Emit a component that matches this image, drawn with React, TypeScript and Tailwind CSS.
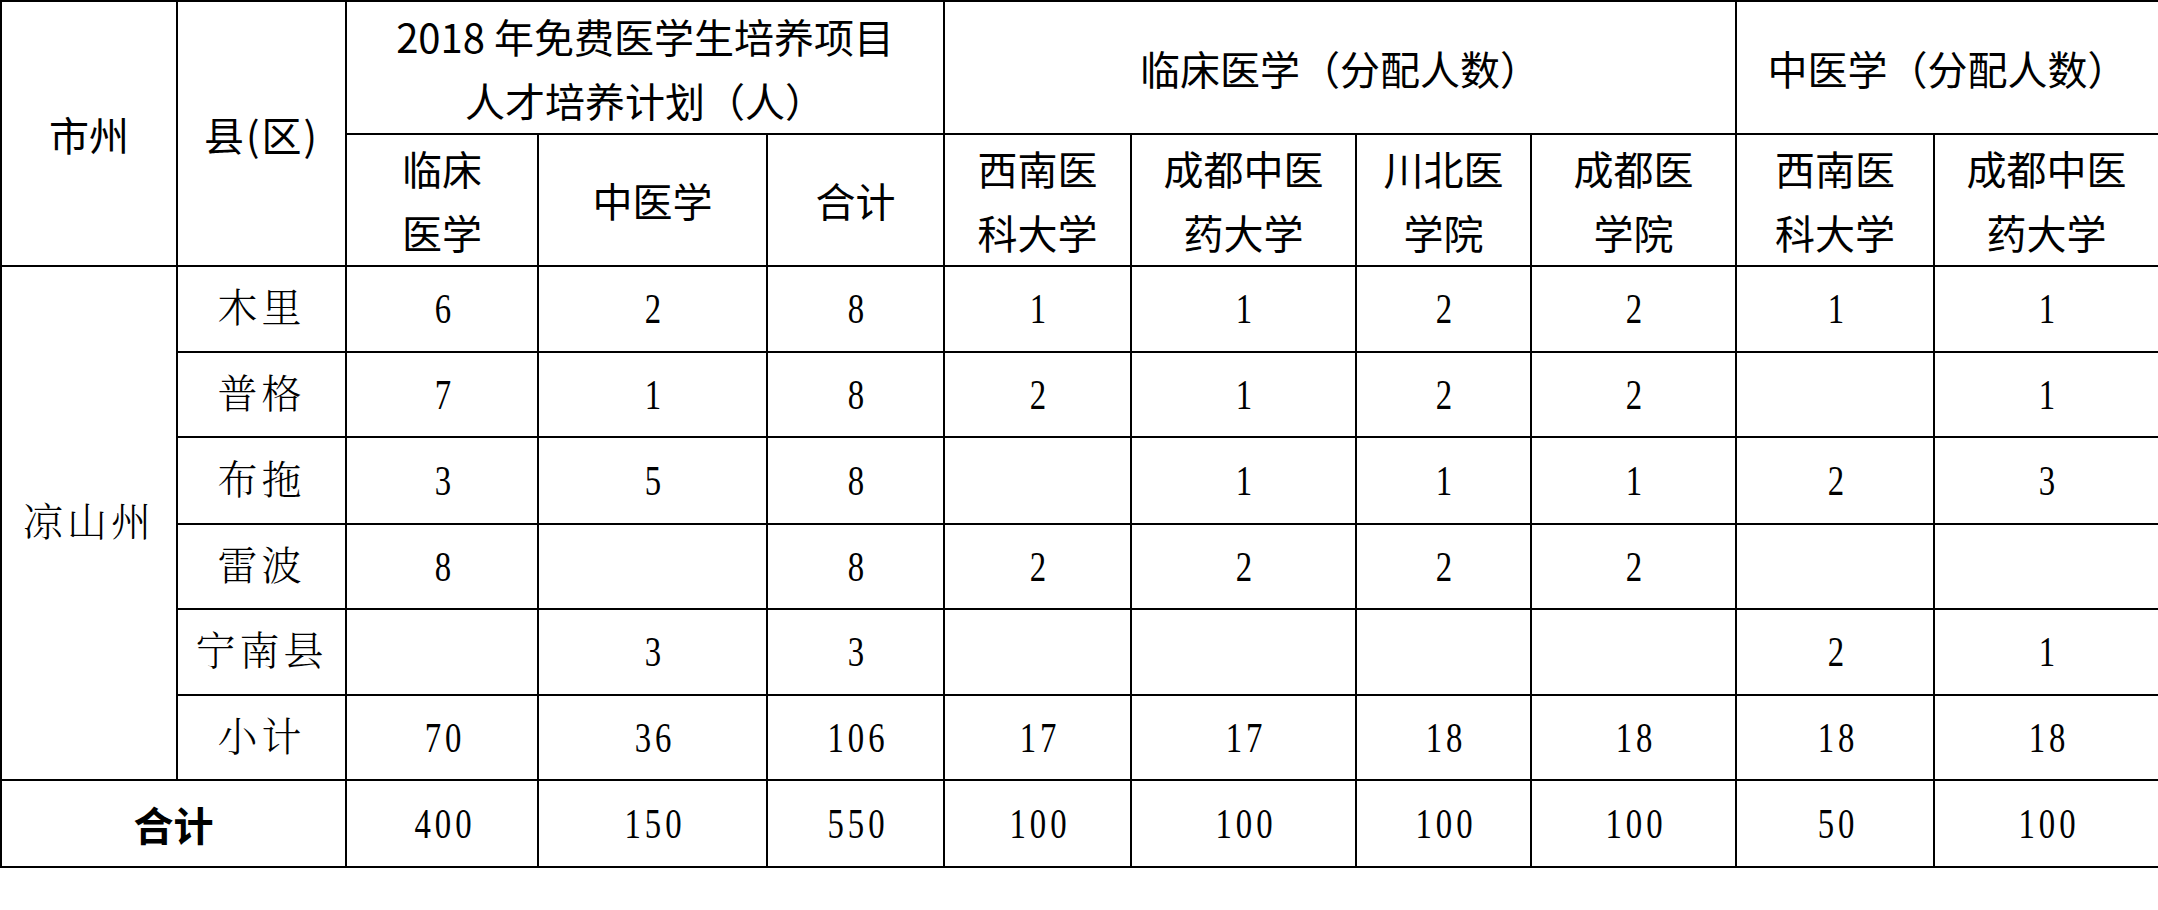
import React from "react";

const head = "border-2 border-black text-center align-middle text-[40px] leading-[64px] text-black font-normal font-['Noto_Sans_CJK_SC','Noto_Sans',sans-serif]";
const name = "border-2 border-black text-center align-middle text-[40px] leading-none tracking-[4px] text-black font-light font-['Liberation_Serif','Noto_Serif_CJK_SC','Noto_Sans_CJK_SC',serif]";
const num = "border-2 border-black text-center align-middle text-[42px] leading-none text-black font-['Liberation_Serif',serif]";

const rows: { county: string; h: string; vals: (number | "")[] }[] = [
  { county: "木里", h: "h-[86px]", vals: [6, 2, 8, 1, 1, 2, 2, 1, 1] },
  { county: "普格", h: "h-[85px]", vals: [7, 1, 8, 2, 1, 2, 2, "", 1] },
  { county: "布拖", h: "h-[87px]", vals: [3, 5, 8, "", 1, 1, 1, 2, 3] },
  { county: "雷波", h: "h-[85px]", vals: [8, "", 8, 2, 2, 2, 2, "", ""] },
  { county: "宁南县", h: "h-[86px]", vals: ["", 3, 3, "", "", "", "", 2, 1] },
  { county: "小计", h: "h-[85px]", vals: [70, 36, 106, 17, 17, 18, 18, 18, 18] },
];

const totals = [400, 150, 550, 100, 100, 100, 100, 50, 100];

// narrow serif digits, like the printed table
const Num = ({ v }: { v: number | "" }) => (
  <span className="inline-block scale-x-[0.78] tracking-[5px] -mr-[5px]">{v}</span>
);

const App: React.FC = () => {
  return (
    <div className="w-[2158px] h-[910px] bg-white overflow-hidden">
      <table className="w-[2158px] table-fixed border-collapse border-2 border-black">
        <colgroup>
          <col className="w-[176px]" />
          <col className="w-[169px]" />
          <col className="w-[192px]" />
          <col className="w-[229px]" />
          <col className="w-[177px]" />
          <col className="w-[187px]" />
          <col className="w-[225px]" />
          <col className="w-[175px]" />
          <col className="w-[205px]" />
          <col className="w-[198px]" />
          <col className="w-[225px]" />
        </colgroup>
        <thead>
          <tr className="h-[133px]">
            <th rowSpan={2} className={head}>市州</th>
            <th rowSpan={2} className={head + " tracking-[2px]"}>县(区)</th>
            <th colSpan={3} className={head}>
              2018 年免费医学生培养项目
              <br />
              人才培养计划（人）
            </th>
            <th colSpan={4} className={head}>临床医学（分配人数）</th>
            <th colSpan={2} className={head}>中医学（分配人数）</th>
          </tr>
          <tr className="h-[132px]">
            <th className={head}>临床<br />医学</th>
            <th className={head}>中医学</th>
            <th className={head}>合计</th>
            <th className={head}>西南医<br />科大学</th>
            <th className={head}>成都中医<br />药大学</th>
            <th className={head}>川北医<br />学院</th>
            <th className={head}>成都医<br />学院</th>
            <th className={head}>西南医<br />科大学</th>
            <th className={head}>成都中医<br />药大学</th>
          </tr>
        </thead>
        <tbody>
          {rows.map((r, i) => (
            <tr key={r.county} className={r.h}>
              {i === 0 && (
                <td rowSpan={rows.length} className={name}>凉山州</td>
              )}
              <td className={name}>{r.county}</td>
              {r.vals.map((v, j) => (
                <td key={j} className={num}><Num v={v} /></td>
              ))}
            </tr>
          ))}
          <tr className="h-[87px]">
            <td colSpan={2} className="border-2 border-black text-center align-middle text-[40px] leading-none font-bold text-black font-['Noto_Sans_CJK_SC',sans-serif]">
              合计
            </td>
            {totals.map((v, j) => (
              <td key={j} className={num}><Num v={v} /></td>
            ))}
          </tr>
        </tbody>
      </table>
    </div>
  );
};

export default App;
